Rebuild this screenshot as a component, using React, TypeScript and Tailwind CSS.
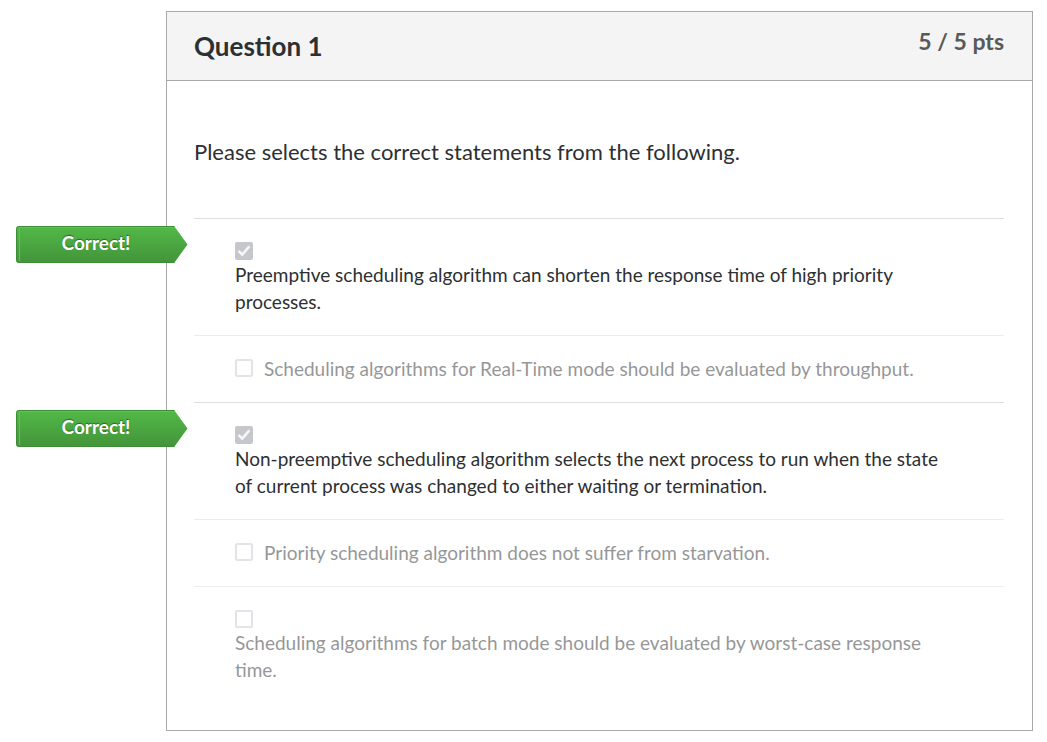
type Answer = { id: string; text: string; selected: boolean };

const answers: Answer[] = [
  { id: "a1", text: "Preemptive scheduling algorithm can shorten the response time of high priority processes.", selected: true },
  { id: "a2", text: "Scheduling algorithms for Real-Time mode should be evaluated by throughput.", selected: false },
  { id: "a3", text: "Non-preemptive scheduling algorithm selects the next process to run when the state of current process was changed to either waiting or termination.", selected: true },
  { id: "a4", text: "Priority scheduling algorithm does not suffer from starvation.", selected: false },
  { id: "a5", text: "Scheduling algorithms for batch mode should be evaluated by worst-case response time.", selected: false },
];

function CorrectFlag() {
  return (
    <div className="absolute top-[7px] -left-[178px] h-[37px] w-[172px]">
      <svg className="absolute inset-0" width="172" height="37" viewBox="0 0 172 37" aria-hidden="true">
        <defs>
          <linearGradient id="flag" x1="0" y1="0" x2="0" y2="1">
            <stop offset="0" stopColor="#52b947" />
            <stop offset="1" stopColor="#43943a" />
          </linearGradient>
        </defs>
        <path d="M2.5 .5H158.5L171.5 18.5L158.5 36.5H2.5Q.5 36.5 .5 34.5V2.5Q.5 .5 2.5 .5Z" fill="url(#flag)" />
        <path d="M158.5 .5H2.5Q.5 .5 .5 2.5V34.5Q.5 36.5 2.5 36.5H158.5" fill="none" stroke="#3d8c36" />
        <path d="M3.5 35V1.5H158" fill="none" stroke="#62c058" />
      </svg>
      <span className="relative block pr-3 text-center text-[19px] leading-[33px] font-bold text-white [text-shadow:0_-1px_1px_#2a6423]">
        Correct!
      </span>
    </div>
  );
}

function AnswerRow({ answer }: { answer: Answer }) {
  return (
    <div className={`relative border-t border-[#dddddd] pt-[19px] pr-[50px] pb-5 pl-[41px] ${answer.selected ? "" : "opacity-50"}`}>
      {answer.selected && <CorrectFlag />}
      <div className="flex flex-wrap items-start gap-x-[11px]">
        <span className="relative mt-1 mb-px size-[18px]">
          <input
            id={answer.id}
            type="checkbox"
            defaultChecked={answer.selected}
            disabled
            className="block size-[18px] appearance-none rounded-[2px] border-2 border-[#c7c8ce] checked:border-[#c6c7cc] checked:bg-[#c6c7cc]"
          />
          {answer.selected && (
            <svg className="pointer-events-none absolute inset-0" width="18" height="18" viewBox="0 0 18 18" fill="none" aria-hidden="true">
              <path d="M3.6 8.8L7.2 12.6L14.4 4.4" stroke="#f7f7f7" strokeWidth="2.5" />
            </svg>
          )}
        </span>
        <label htmlFor={answer.id} className="text-[19px] leading-[27px]">
          {answer.text}
        </label>
      </div>
    </div>
  );
}

export default function App() {
  return (
    <main className="bg-white pt-[11px] pr-[14px] pb-[11px] pl-[166px] font-['Lato',sans-serif] text-[#2d3032]">
      <section className="border border-[#a8a8a8]">
        <header className="flex items-start justify-between border-b border-[#a8a8a8] bg-[#f4f4f4] pt-3 pr-7 pb-3 pl-[27px]">
          <h2 className="pt-1 pb-1 text-[26px] leading-9 font-bold">Question 1</h2>
          <div className="text-[23px] leading-[34px] font-bold text-[#595959]">5 / 5 pts</div>
        </header>
        <div className="pt-[55px] pr-7 pb-[27px] pl-[27px]">
          <p className="mb-[51px] text-[22px] leading-[31px]">Please selects the correct statements from the following.</p>
          <div>
            {answers.map((a) => (
              <AnswerRow key={a.id} answer={a} />
            ))}
          </div>
        </div>
      </section>
    </main>
  );
}
